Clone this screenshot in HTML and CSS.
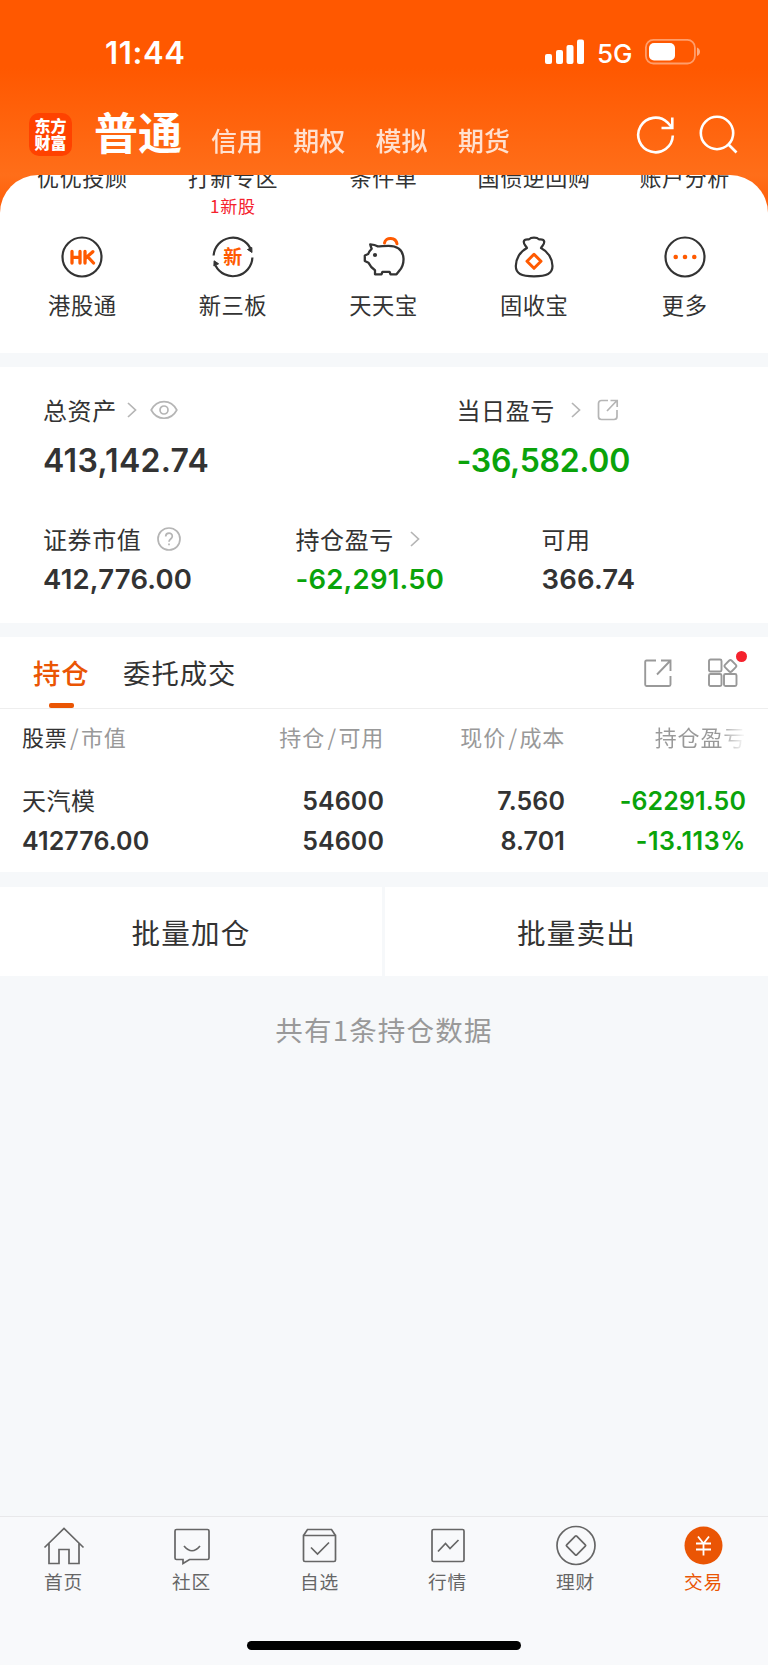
FILE: index.html
```
<!DOCTYPE html>
<html lang="zh-CN">
<head>
<meta charset="utf-8">
<title>交易</title>
<link rel="stylesheet" href="styles.css">
</head>
<body>
<div class="app">
  <header class="top">
    <div class="status">
      <span class="time">11:44</span>
      <div class="status-right">
        <svg class="signal" width="40" height="26" viewBox="0 0 40 26" fill="#fff"><rect x="0" y="15" width="7" height="10" rx="2"/><rect x="11" y="11" width="7" height="14" rx="2"/><rect x="21.500" y="6" width="7" height="19" rx="2"/><rect x="32" y="0.500" width="7" height="24.500" rx="2"/></svg>
        <span class="net">5G</span>
        <svg class="battery" width="56" height="26" viewBox="0 0 56 26"><rect x="0.900" y="0.900" width="49" height="23.600" rx="7.500" fill="none" stroke="#fff" stroke-opacity=".42" stroke-width="1.800"/><rect x="4" y="4" width="26" height="17.500" rx="5" fill="#fff"/><path d="M52 8.500c4 1.500 4 7 0 8.500z" fill="#fff" fill-opacity=".5"/></svg>
      </div>
    </div>
    <nav class="modes">
      <div class="logo"><span>东方</span><span>财富</span></div>
      <span class="mode-active">普通</span>
      <span class="mode">信用</span><span class="mode">期权</span><span class="mode">模拟</span><span class="mode">期货</span>
      <svg class="refresh" width="40" height="40" viewBox="0 0 40 40" fill="none" stroke="#fff" stroke-width="2.600"><path d="M36.800 20.500A17.300 17.300 0 1 1 31.500 7.500L36 12.500"/><path d="M36.300 2.500V13H25.500"/></svg>
      <svg class="search" width="40" height="40" viewBox="0 0 40 40" fill="none" stroke="#fff" stroke-width="2.600"><circle cx="18" cy="18" r="16.200"/><path d="M29.500 29.500L37.500 37.500"/></svg>
    </nav>
  </header>

  <section class="sheet">
    <div class="grid clipped">
      <span>优优投顾</span><span>打新专区</span><span>条件单</span><span>国债逆回购</span><span>账户分析</span>
    </div>
    <div class="grid notes"><span></span><span>1新股</span><span></span><span></span><span></span></div>
    <div class="grid entries">
      <div class="entry">
        <svg width="44" height="44" viewBox="0 0 44 44"><circle cx="22" cy="22" r="19.500" fill="none" stroke="#333" stroke-width="2.200"/><path d="M12 16.500v11.500M20 16.500v11.500M12 22.300h8M25 16.500v11.500M32.800 16.700l-7.300 6.600M27.500 21.500l6 6.500" fill="none" stroke="#ff5a00" stroke-width="3.300" stroke-linecap="round"/></svg>
        <span>港股通</span>
      </div>
      <div class="entry">
        <svg width="44" height="44" viewBox="0 0 44 44"><path d="M2.600 20.500A19.500 19.500 0 0 1 39.500 13.500M41.400 22.500A19.500 19.500 0 0 1 4.500 30.500" fill="none" stroke="#333" stroke-width="2.200"/><path d="M40.800 12.500l.2 5-4.500-3zM2.900 31l.2-5.200 4.500 3z" fill="#333" stroke="#333" stroke-linejoin="round"/><text x="22" y="29" text-anchor="middle" class="icon-text">新</text></svg>
        <span>新三板</span>
      </div>
      <div class="entry">
        <svg width="44" height="44" viewBox="0 0 44 44" fill="none" stroke-linejoin="round" stroke-linecap="round"><path d="M16.500 11.300C14.500 10 12 9.500 9.200 9.300C9.500 11 10.200 12.500 10.700 13.800C9 15.500 7.800 17 7.200 19L3.800 20.500V26L7.500 27.800C9 31 11 33.300 14 35.200V39.300H20.500L21.500 36.800H28.500L29.500 39.300H35.500L38.500 35.500C41.500 32 42.700 28 42.500 23.500C42 14.500 35.500 10.800 27.500 10.800C23 10.800 20 11.300 16.500 11.300Z" stroke="#333" stroke-width="2.300"/><circle cx="14" cy="20" r="2.100" fill="#333"/><path d="M23.500 8C24.500 1.500 35 2 36 8.800" stroke="#ff5a00" stroke-width="3"/></svg>
        <span>天天宝</span>
      </div>
      <div class="entry">
        <svg width="44" height="44" viewBox="0 0 44 44" fill="none" stroke-linejoin="round"><path d="M15 13C13 10 11.500 9 11.800 6.500C12.200 4 14.500 4.200 17 4.400C19 2 25 2 27 4.400C29.500 4.200 31.800 4 32.200 6.500C32.500 9 31 10 29 13C36 16.500 40.500 24 40.500 31C40.500 38.500 35 41.300 22 41.300C9 41.300 3.800 38.500 3.800 31C3.800 24 8 16.500 15 13Z" stroke="#333" stroke-width="2.200"/><path d="M22 19.300L29 26.300L22 33.300L15 26.300Z" stroke="#ff5a00" stroke-width="3"/></svg>
        <span>固收宝</span>
      </div>
      <div class="entry">
        <svg width="44" height="44" viewBox="0 0 44 44"><circle cx="22" cy="22" r="19.500" fill="none" stroke="#333" stroke-width="2.200"/><g fill="#ff5a00"><circle cx="12.700" cy="22" r="2.300"/><circle cx="22" cy="22" r="2.300"/><circle cx="31.300" cy="22" r="2.300"/></g></svg>
        <span>更多</span>
      </div>
    </div>
  </section>

  <section class="assets">
    <div class="asset-row major">
      <div class="asset">
        <div class="label">总资产<svg class="chev" width="10" height="16" viewBox="0 0 10 16"><path d="M1 1l7.500 7L1 15"/></svg><svg class="eye" width="28" height="20" viewBox="0 0 28 20"><path d="M1.200 10C7-1.300 21-1.300 26.800 10C21 21 7 21 1.200 10Z"/><circle cx="14" cy="10" r="4"/></svg></div>
        <div class="value">413,142.74</div>
      </div>
      <div class="asset">
        <div class="label">当日盈亏<svg class="chev far" width="10" height="16" viewBox="0 0 10 16"><path d="M1 1l7.500 7L1 15"/></svg><svg class="share" width="22" height="22" viewBox="0 0 22 22"><path d="M11 1.500H4.500Q1.500 1.500 1.500 4.500V17.500Q1.500 20.500 4.500 20.500H17Q20 20.500 20 17.500V11M10 12L19.500 2M13.500 1.500H20.200V8"/></svg></div>
        <div class="value green tight">-36,582.00</div>
      </div>
    </div>
    <div class="asset-row minor">
      <div class="asset">
        <div class="label">证券市值<svg class="help" width="24" height="24" viewBox="0 0 24 24"><circle cx="12" cy="12" r="11"/><path d="M8.700 9.500C8.700 5 15.300 5 15.300 9.300C15.300 12 12 12 12 14.800"/><path d="M12 16.500V18.300"/></svg></div>
        <div class="value">412,776.00</div>
      </div>
      <div class="asset">
        <div class="label">持仓盈亏<svg class="chev far" width="10" height="16" viewBox="0 0 10 16"><path d="M1 1l7.500 7L1 15"/></svg></div>
        <div class="value green">-62,291.50</div>
      </div>
      <div class="asset">
        <div class="label">可用</div>
        <div class="value">366.74</div>
      </div>
    </div>
  </section>

  <section class="holdings">
    <div class="tabs">
      <span class="tab active">持仓</span>
      <span class="tab">委托成交</span>
      <svg class="tool-share" width="28" height="28" viewBox="0 0 28 28"><path d="M12 1.500H2.500Q1.200 1.500 1.200 3V25.500Q1.200 27 2.500 27H25Q26.500 27 26.500 25.500V17M13 15.500L26 2M17 1.500H26.500V12"/></svg>
      <div class="tool-grid"><svg width="30" height="29" viewBox="0 0 30 29"><rect x="1" y="1.500" width="12.500" height="12" rx="1.500"/><rect x="1" y="16" width="12.500" height="12" rx="1.500"/><rect x="16" y="16" width="12.500" height="12" rx="1.500"/><rect x="17.700" y="3.300" width="9.400" height="9.400" rx="2" transform="rotate(45 22.400 8)"/></svg><i class="dot"></i></div>
    </div>
    <div class="row head">
      <span><b>股票</b><i>/</i>市值</span><span>持仓<i>/</i>可用</span><span>现价<i>/</i>成本</span><span class="fade">持仓盈亏</span>
    </div>
    <div class="row first"><span class="name">天汽模</span><span>54600</span><span>7.560</span><span class="green">-62291.50</span></div>
    <div class="row second"><span>412776.00</span><span>54600</span><span>8.701</span><span class="green wide">-13.113%</span></div>
  </section>

  <section class="actions"><span>批量加仓</span><span>批量卖出</span></section>
  <p class="count">共有1条持仓数据</p>

  <footer class="bottom">
    <nav class="dock">
      <div class="item"><svg width="44" height="44" viewBox="0 0 44 44"><path d="M2.500 24.500L22 5.500L41.500 24.500M7 20.500V40.500H17V26.500H27V40.500H37V20.500"/></svg><span>首页</span></div>
      <div class="item"><svg width="44" height="44" viewBox="0 0 44 44"><path d="M6.500 6.500H37.500Q39 6.500 39 8V35Q39 36.500 37.500 36.500H19.500L13 40.500V36.500H6.500Q5 36.500 5 35V8Q5 6.500 6.500 6.500ZM14 23Q22 32.500 30 23"/></svg><span>社区</span></div>
      <div class="item"><svg width="44" height="44" viewBox="0 0 44 44"><path d="M5.500 12.500L9.500 6.500H33.500L37.500 12.500M5.500 12.500H37.500V37Q37.500 38.500 36 38.500H7Q5.500 38.500 5.500 37ZM13 24.500L19.500 31L31 19.500"/></svg><span>自选</span></div>
      <div class="item"><svg width="44" height="44" viewBox="0 0 44 44"><rect x="6" y="6.500" width="32" height="32" rx="1.500"/><path d="M12 28.500L19.500 20.500L24 25.500L32.500 17"/></svg><span>行情</span></div>
      <div class="item"><svg width="44" height="44" viewBox="0 0 44 44"><circle cx="22" cy="22.500" r="19"/><rect x="14.900" y="15.400" width="14.200" height="14.200" rx="1" transform="rotate(45 22 22.500)"/></svg><span>理财</span></div>
      <div class="item on"><svg width="44" height="44" viewBox="0 0 44 44"><circle class="coin" cx="21.500" cy="22.500" r="19"/><path class="yen" d="M16 13.500L21.500 20.500L27 13.500M21.500 20.500V32.500M14 20.500H29M14 26.500H29"/></svg><span>交易</span></div>
    </nav>
    <div class="home-bar"></div>
  </footer>
</div>
</body>
</html>
```
FILE: styles.css
```
* { box-sizing: border-box; }
body { margin: 0; background: #f6f8fa; color: #333; font-family: "Noto Sans CJK SC", sans-serif; }
svg { display: block; flex: none; }
i { font-style: normal; }
.app { width: 768px; height: 1665px; display: flex; flex-direction: column; background: #f6f8fa; overflow: hidden; }

.top { flex: none; height: 215px; margin-bottom: -40px; background: linear-gradient(#ff5800 0, #ff5800 68px, #ff6e19 175px, #ff5b05 215px); color: #fff; }
.status { height: 105px; padding: 0 67px 0 105px; display: flex; justify-content: space-between; }
.time { margin-top: 33px; font: 600 31px/40px Inter, sans-serif; letter-spacing: .6px; }
.status-right { display: flex; margin-top: 39px; }
.net { width: 48px; margin-left: 12px; font: 500 26px/30px Inter, sans-serif; }
.modes { height: 70px; display: flex; padding-left: 29px; }
.logo { width: 43px; height: 43px; margin-top: 8px; padding-top: 4px; border-radius: 10px; background: #ff4200; font: 900 16px/17px "Noto Sans CJK SC", sans-serif; text-align: center; }
.logo span { display: block; }
.mode-active { width: 87px; margin: -1px 30px 0 22px; font-size: 44px; line-height: 55px; font-weight: 700; white-space: nowrap; }
.mode { width: 52.300px; margin-right: 30px; margin-top: 15px; font-size: 26px; line-height: 40px; font-weight: 500; opacity: .8; white-space: nowrap; }
.refresh { margin: 10px 0 0 96px; }
.search { margin: 10px 0 0 23px; }

.sheet { flex: none; height: 178px; border-radius: 38px 38px 0 0; background: #fff; overflow: hidden; }
.grid { display: grid; grid-template-columns: repeat(5, 150.600px); padding-left: 7px; text-align: center; }
.clipped { height: 20px; font-size: 22px; letter-spacing: .6px; line-height: 34px; }
.clipped span { margin: -16px 0 0; }
.notes { height: 40px; color: #f5222d; font-size: 17px; line-height: 20px; letter-spacing: .7px; }
.notes span { margin-top: 1px; }
.entry { display: flex; flex-direction: column; align-items: center; font-size: 22.300px; letter-spacing: .5px; line-height: 32px; }
.entry span { margin-top: 9px; }
.icon-text { font: 700 19px "Noto Sans CJK SC", sans-serif; fill: #ff5a00; }

.assets { flex: none; height: 256px; margin-top: 14px; padding: 26px 0 0 43px; background: #fff; }
.asset-row { display: grid; }
.major { height: 129px; grid-template-columns: 413.500px 1fr; }
.minor { grid-template-columns: 252.500px 246px 1fr; }
.label { height: 34px; display: flex; align-items: center; font-size: 24px; line-height: 32px; padding-bottom: 1px; letter-spacing: .6px; }
.value { font: 600 32px/40px Inter, sans-serif; letter-spacing: .3px; }
.major .value { margin-top: 14px; }
.major .tight { letter-spacing: -.3px; }
.minor .value { font-size: 27.500px; letter-spacing: .2px; margin-top: 3px; }
.green { color: #0aa30a; }
.label svg { fill: none; stroke: #b5b5b5; stroke-width: 1.700; }
.chev { margin-left: 10px; }
.chev.far { margin-left: 16px; }
.eye { margin-left: 13px; }
.share { margin-left: 16px; }
.help { margin-left: 16px; }

.holdings { flex: none; height: 235px; margin-top: 14px; background: #fff; }
.tabs { height: 72px; border-bottom: 1px solid #eee; display: flex; padding-left: 33px; }
.tab { position: relative; height: 72px; margin-right: 33.500px; font-size: 27.300px; letter-spacing: 1px; line-height: 71px; }
.tab.active { color: #ea5504; font-weight: 500; }
.tab.active::after { content: ""; position: absolute; left: 16px; bottom: 1px; width: 25px; height: 5px; border-radius: 2px; background: #ea5504; }
.tabs svg { fill: none; stroke: #999; stroke-width: 1.900; }
.tool-share { margin: 22px 0 0 auto; }
.tool-grid { position: relative; margin: 21px 30px 0 36px; }
.dot { position: absolute; right: -8.500px; top: -7px; width: 11px; height: 11px; border-radius: 50%; background: #f5222d; }
.row { display: grid; grid-template-columns: 200px 162px 181px 181px; padding-left: 22px; font: 600 25px/40px Inter, sans-serif; letter-spacing: .1px; }
.row > span + span { text-align: right; }
.head { height: 62px; padding-top: 8px; font: 400 22px/38px "Noto Sans CJK SC", sans-serif; letter-spacing: .8px; color: #999; }
.head b { font-weight: 400; color: #333; }
.head i { margin: 0 1.500px 0 2.500px; font-size: 22px; }
.fade { background: linear-gradient(90deg, #999 85%, #fff 100%); -webkit-background-clip: text; background-clip: text; color: transparent; }
.first { height: 49px; line-height: 60px; }
.second { height: 50px; line-height: 42px; }
.wide { letter-spacing: .6px; }
.name { font: 400 24px/58px "Noto Sans CJK SC", sans-serif; letter-spacing: .5px; }

.actions { flex: none; height: 89px; margin-top: 15px; display: grid; grid-template-columns: 382px 383px; gap: 3px; text-align: center; font-size: 28.600px; letter-spacing: 1.200px; line-height: 89px; }
.actions span { background: #fff; }
.count { margin: 31px 0 0; text-align: center; color: #999; font-size: 27.500px; line-height: 44px; letter-spacing: 1.200px; }

.bottom { flex: none; height: 149px; margin-top: auto; border-top: 1px solid #e8e8ea; background: #f8f9fb; }
.dock { display: grid; grid-template-columns: repeat(6, 1fr); padding-top: 6px; }
.item { display: flex; flex-direction: column; align-items: center; color: #666; font-size: 18.700px; letter-spacing: .7px; line-height: 28px; }
.item span { margin: 0 0 0 -1px; }
.item svg { fill: none; stroke: #666; stroke-width: 1.700; margin-top: -.5px; }
.item.on { color: #ea5504; }
.item .coin { fill: #ea5504; stroke: none; }
.item .yen { stroke: #fff; stroke-width: 1.800; }
.home-bar { width: 274px; height: 9px; margin: 46.500px auto 0; border-radius: 5px; background: #000; }
```
